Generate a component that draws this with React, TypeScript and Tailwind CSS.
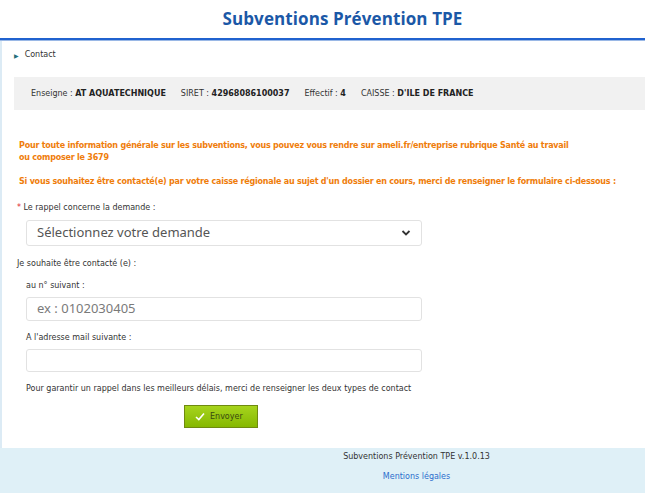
import React from "react";

const small = "font-['DejaVu_Sans',Verdana,sans-serif] text-[8px] text-[#333]";

function Chevron() {
  return (
    <svg width="10" height="8" viewBox="0 0 10 8" fill="none" stroke="#333" strokeWidth="1.8">
      <path d="M1.5 2 L5 5.5 L8.5 2" />
    </svg>
  );
}

export default function App() {
  return (
    <div className="w-[645px] h-[493px] bg-white flex flex-col overflow-hidden">
      {/* Header */}
      <div className="h-[38px] flex items-center justify-center pl-[40px]">
        <h1 className="font-['Open_Sans',sans-serif] font-bold text-[17px] text-[#1b58a7] tracking-[0.1px]">
          Subventions Prévention TPE
        </h1>
      </div>
      <div className="h-[2px] bg-[#2062cf]" />
      <div className="h-[1px] bg-[#9ab8e6]" />

      {/* Body */}
      <div className="flex-1 border-l-2 border-[#dcebf5] flex flex-col">
        <div className={`${small} flex items-center gap-[6px] pl-[12px] pt-[5px] h-[23px]`}>
          <span className="text-[6px] text-[#24707a]">▶</span>
          <span>Contact</span>
        </div>

        <div className={`${small} ml-[12px] mt-[13px] h-[33px] bg-[#f1f1f1] flex items-center gap-[15px] pl-[17px]`}>
          <span>
            Enseigne : <b className="text-[#222]">AT AQUATECHNIQUE</b>
          </span>
          <span>
            SIRET : <b className="text-[#222]">42968086100037</b>
          </span>
          <span>
            Effectif : <b className="text-[#222]">4</b>
          </span>
          <span>
            CAISSE : <b className="text-[#222]">D'ILE DE FRANCE</b>
          </span>
        </div>

        <div className="font-['DejaVu_Sans',Verdana,sans-serif] text-[8px] font-bold text-[#ef7d0b] pl-[17px] pt-[30px] leading-[12px] whitespace-nowrap tracking-[-0.22px]">
          <p>Pour toute information générale sur les subventions, vous pouvez vous rendre sur ameli.fr/entreprise rubrique Santé au travail</p>
          <p>ou composer le 3679</p>
          <p className="mt-[12px]">
            Si vous souhaitez être contacté(e) par votre caisse régionale au sujet d'un dossier en cours, merci de renseigner le formulaire ci-dessous :
          </p>
        </div>

        <div className={`${small} pl-[15px] pt-[14px] leading-[12px]`}>
          <span className="text-[#e0292f]">*</span> Le rappel concerne la demande :
        </div>
        <div className="ml-[24px] mt-[6px] w-[396px] h-[26px] border border-[#e2e2e2] rounded-[3px] flex items-center justify-between pl-[10px] pr-[10px] font-['Noto_Sans',sans-serif] text-[13px] text-[#555]">
          <span>Sélectionnez votre demande</span>
          <Chevron />
        </div>

        <div className={`${small} pl-[15px] pt-[12px] leading-[12px]`}>Je souhaite être contacté (e) :</div>
        <div className={`${small} pl-[24px] pt-[10px] leading-[12px]`}>au n° suivant :</div>
        <div className="ml-[24px] mt-[5px] w-[396px] h-[24px] border border-[#e2e2e2] rounded-[3px] flex items-center pl-[10px] font-['Noto_Sans',sans-serif] text-[13px] text-[#7a7a7a]">
          ex : 0102030405
        </div>

        <div className={`${small} pl-[24px] pt-[11px] leading-[12px]`}>A l'adresse mail suivante :</div>
        <div className="ml-[24px] mt-[5px] w-[396px] h-[23px] border border-[#e2e2e2] rounded-[3px]" />

        <div className={`${small} pl-[24px] pt-[11px] leading-[12px]`}>
          Pour garantir un rappel dans les meilleurs délais, merci de renseigner les deux types de contact
        </div>

        <div className="pl-[182px] pt-[10px]">
          <button className="w-[74px] h-[23px] border border-[#6f8a10] bg-gradient-to-b from-[#a6d41c] to-[#86b800] flex items-center gap-[5px] pl-[10px] font-['DejaVu_Sans',Verdana,sans-serif] text-[8px] text-[#3a4a10]">
            <svg width="10" height="9" viewBox="0 0 10 9" fill="none" stroke="#fff" strokeWidth="1.6">
              <path d="M1 5 L3.8 7.5 L9 1.5" />
            </svg>
            Envoyer
          </button>
        </div>
      </div>

      {/* Footer */}
      <div className="h-[45px] bg-[#dff0f7] pl-[188px] flex flex-col items-center pt-[3px] font-['DejaVu_Sans',Verdana,sans-serif] text-[8px] leading-[12px]">
        <span className="text-[#333]">Subventions Prévention TPE v.1.0.13</span>
        <span className="text-[#2b6dcc] mt-[8px]">Mentions légales</span>
      </div>
    </div>
  );
}
